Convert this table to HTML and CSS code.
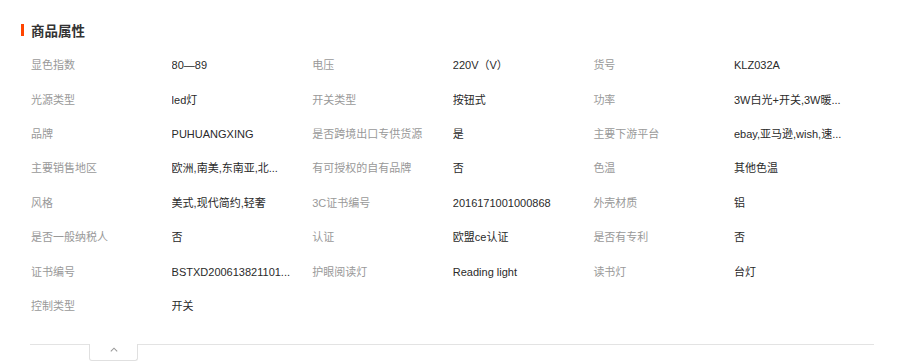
FILE: index.html
```html
<!DOCTYPE html>
<html lang="zh-CN">
<head>
<meta charset="utf-8">
<title>商品属性</title>
<link rel="stylesheet" href="styles.css">
</head>
<body>
<section class="panel">
  <h2 class="title">商品属性</h2>
  <div class="attrs">
    <span class="k">显色指数</span><span class="v">80—89</span>
    <span class="k">电压</span><span class="v">220V（V）</span>
    <span class="k">货号</span><span class="v">KLZ032A</span>

    <span class="k">光源类型</span><span class="v">led灯</span>
    <span class="k">开关类型</span><span class="v">按钮式</span>
    <span class="k">功率</span><span class="v">3W白光+开关,3W暖...</span>

    <span class="k">品牌</span><span class="v">PUHUANGXING</span>
    <span class="k">是否跨境出口专供货源</span><span class="v">是</span>
    <span class="k">主要下游平台</span><span class="v">ebay,亚马逊,wish,速...</span>

    <span class="k">主要销售地区</span><span class="v">欧洲,南美,东南亚,北...</span>
    <span class="k">有可授权的自有品牌</span><span class="v">否</span>
    <span class="k">色温</span><span class="v">其他色温</span>

    <span class="k">风格</span><span class="v">美式,现代简约,轻奢</span>
    <span class="k">3C证书编号</span><span class="v">2016171001000868</span>
    <span class="k">外壳材质</span><span class="v">铝</span>

    <span class="k">是否一般纳税人</span><span class="v">否</span>
    <span class="k">认证</span><span class="v">欧盟ce认证</span>
    <span class="k">是否有专利</span><span class="v">否</span>

    <span class="k">证书编号</span><span class="v">BSTXD200613821101...</span>
    <span class="k">护眼阅读灯</span><span class="v">Reading light</span>
    <span class="k">读书灯</span><span class="v">台灯</span>

    <span class="k">控制类型</span><span class="v">开关</span>
  </div>
  <div class="foot">
    <button class="toggle" type="button" aria-label="收起">
      <svg width="8" height="5" viewBox="0 0 8 5"><path d="M0.8 4.4 L4 1.2 L7.2 4.4" fill="none" stroke="#9a9a9a" stroke-width="1.1"/></svg>
    </button>
  </div>
</section>
</body>
</html>
```

FILE: styles.css
```css
* { box-sizing: border-box; }
html, body { margin: 0; padding: 0; background: #fff; }
body {
  font-family: "Liberation Sans", "Noto Sans CJK SC", sans-serif;
  color: #333;
}
.panel {
  width: 914px;
  padding: 20px 40px 0 30px;
}
.title {
  margin: 0 0 8px -9px;
  display: flex;
  align-items: center;
  gap: 7px;
  font-size: 13.5px;
  font-weight: bold;
  line-height: 20px;
  color: #333;
  font-family: "Noto Sans CJK SC", sans-serif;
}
.title::before {
  content: "";
  width: 3px;
  height: 12px;
  background: #ff4400;
}
.attrs {
  display: grid;
  grid-template-columns: repeat(6, 140.6px);
  grid-auto-rows: 34.4px;
  align-items: center;
  padding-left: 1px;
  padding-bottom: 21px;
  font-size: 11px;
  line-height: 16px;
}
.k {
  color: #999;
  white-space: nowrap;
}
.v {
  color: #2a2a2a;
  white-space: nowrap;
  overflow: hidden;
}
.foot {
  border-top: 1px solid #e3e3e3;
  width: 844px;
  height: 30px;
}
.toggle {
  display: flex;
  align-items: center;
  justify-content: center;
  margin: -1px 0 0 59px;
  width: 49px;
  height: 17px;
  padding: 0 0 5px;
  background: #fff;
  border: 1px solid #e0e0e0;
  border-top: 0;
  border-radius: 0 0 3px 3px;
  cursor: pointer;
}
```
